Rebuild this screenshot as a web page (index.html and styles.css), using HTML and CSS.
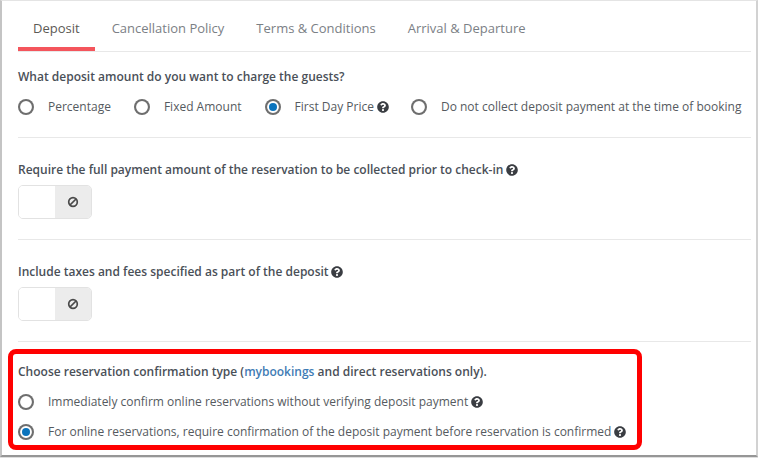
FILE: index.html
```html
<!DOCTYPE html>
<html lang="en">
<head>
<meta charset="utf-8">
<title>Deposit settings</title>
<link rel="stylesheet" href="styles.css">
</head>
<body>
<svg class="defs" width="0" height="0" aria-hidden="true">
  <symbol id="help" viewBox="0 0 512 512"><path d="M504 256c0 136.967-111.033 248-248 248S8 392.967 8 256 119.033 8 256 8s248 111.033 248 248zM262.655 90c-54.497 0-89.255 22.957-116.549 63.758-3.536 5.286-2.353 12.415 2.715 16.258l34.699 26.31c5.205 3.947 12.621 3.008 16.665-2.122 17.864-22.658 30.113-35.797 57.303-35.797 20.429 0 45.698 13.148 45.698 32.958 0 14.976-12.363 22.667-32.534 33.976C247.128 238.528 216 254.941 216 296v4c0 6.627 5.373 12 12 12h56c6.627 0 12-5.373 12-12v-1.333c0-28.462 83.186-29.647 83.186-106.667 0-58.002-60.165-102-116.531-102zM256 338c-25.365 0-46 20.635-46 46 0 25.364 20.635 46 46 46s46-20.636 46-46c0-25.365-20.635-46-46-46z"/></symbol>
  <symbol id="ban" viewBox="0 0 12 12"><circle cx="6" cy="6" r="4.3" fill="none" stroke="currentColor" stroke-width="1.7"/><line x1="3" y1="9" x2="9" y2="3" stroke="currentColor" stroke-width="1.7"/></symbol>
</svg>
<main class="panel">
  <nav class="tabs">
    <a class="tab tab-active">Deposit</a>
    <a class="tab">Cancellation Policy</a>
    <a class="tab">Terms &amp; Conditions</a>
    <a class="tab">Arrival &amp; Departure</a>
  </nav>

  <section class="block block-amount">
    <p class="question">What deposit amount do you want to charge the guests?</p>
    <div class="radio-row">
      <label class="radio"><span class="dot"></span><span>Percentage</span></label>
      <label class="radio"><span class="dot"></span><span>Fixed Amount</span></label>
      <label class="radio"><span class="dot dot-on"></span><span>First Day Price</span><svg class="help"><use href="#help"/></svg></label>
      <label class="radio"><span class="dot"></span><span>Do not collect deposit payment at the time of booking</span></label>
    </div>
  </section>

  <section class="block block-toggle">
    <p class="question">Require the full payment amount of the reservation to be collected prior to check-in <svg class="help"><use href="#help"/></svg></p>
    <div class="toggle"><span class="toggle-on"></span><span class="toggle-off"><svg class="ban"><use href="#ban"/></svg></span></div>
  </section>

  <section class="block block-toggle">
    <p class="question">Include taxes and fees specified as part of the deposit <svg class="help"><use href="#help"/></svg></p>
    <div class="toggle"><span class="toggle-on"></span><span class="toggle-off"><svg class="ban"><use href="#ban"/></svg></span></div>
  </section>

  <section class="block block-confirm">
    <p class="question">Choose reservation confirmation type (<a class="link">mybookings</a> and direct reservations only).</p>
    <div class="radio-stack">
      <label class="radio"><span class="dot"></span><span>Immediately confirm online reservations without verifying deposit payment</span><svg class="help"><use href="#help"/></svg></label>
      <label class="radio"><span class="dot dot-on"></span><span>For online reservations, require confirmation of the deposit payment before reservation is confirmed</span><svg class="help"><use href="#help"/></svg></label>
    </div>
  </section>

  <div class="highlight"></div>
</main>
</body>
</html>
```

FILE: styles.css
```css
* { box-sizing: border-box; }

html, body { margin: 0; padding: 0; }

body {
  width: 758px;
  height: 458px;
  overflow: hidden;
  background: #ffffff;
  font-family: "Open Sans", sans-serif;
  font-size: 12px;
  line-height: 18px;
  color: #555a60;
}

.defs { position: absolute; }

.panel {
  position: relative;
  width: 758px;
  height: 457px;
  padding: 0 5px 0 16px;
  background: #ffffff;
  border-top: 1px solid #e4e4e4;
  border-left: 2px solid #c4c4c4;
  border-right: 2px solid #d2d2d2;
  border-bottom: 2px solid #969696;
  box-shadow: 0 1px 0 #dedede;
}

.tabs {
  display: flex;
  gap: 2px;
  height: 51px;
  border-bottom: 1px solid #e8e8e8;
}

.tab {
  height: 50px;
  padding: 18px 15px 0;
  font-size: 13px;
  line-height: 19px;
  color: #7b8085;
}

.tab-active {
  color: #5c5a55;
  border-bottom: 4px solid #f4555c;
}

.block { border-bottom: 1px solid #e8e8e8; }

.block-amount { height: 86px; padding-top: 16px; }

.block-toggle { height: 102px; padding-top: 23px; }

.block-confirm { border-bottom: 0; padding-top: 21px; }

.question {
  margin: 0;
  font-weight: 600;
  color: #4a5058;
}

.radio-row {
  display: flex;
  gap: 23px;
  margin-top: 12px;
}

.radio-stack {
  display: flex;
  flex-direction: column;
  gap: 12px;
  margin-top: 12px;
}

.radio {
  display: flex;
  align-items: center;
  height: 18px;
}

.dot {
  display: flex;
  align-items: center;
  justify-content: center;
  flex: none;
  width: 16px;
  height: 16px;
  margin-right: 14px;
  border-radius: 50%;
  background: #ffffff;
  box-shadow: inset 0 0 0 2.1px #6e6e6e;
}

.dot-on::after {
  content: "";
  width: 8px;
  height: 8px;
  border-radius: 50%;
  background: #0b74bd;
}

.help {
  flex: none;
  width: 12px;
  height: 12px;
  margin-left: 3px;
  margin-right: -1px;
  vertical-align: -2px;
  fill: #3a3d42;
}

.radio-row .help { margin-left: 3px; }

.question .help { margin-left: -1px; }

.toggle {
  display: flex;
  width: 74px;
  height: 34px;
  margin-top: 6px;
  border: 1px solid #e2e2e2;
  border-radius: 5px;
  overflow: hidden;
}

.toggle-on {
  width: 36px;
  background: #ffffff;
}

.toggle-off {
  display: flex;
  flex: 1;
  align-items: center;
  justify-content: center;
  background: #ececec;
}

.ban {
  width: 12px;
  height: 12px;
  color: #4a4a4a;
}

.link {
  font-weight: 600;
  color: #3f7cb5;
}

.highlight {
  position: absolute;
  left: 6px;
  top: 348px;
  width: 634px;
  height: 101px;
  border: 5px solid #ff0000;
  border-radius: 8px;
  pointer-events: none;
}
```
